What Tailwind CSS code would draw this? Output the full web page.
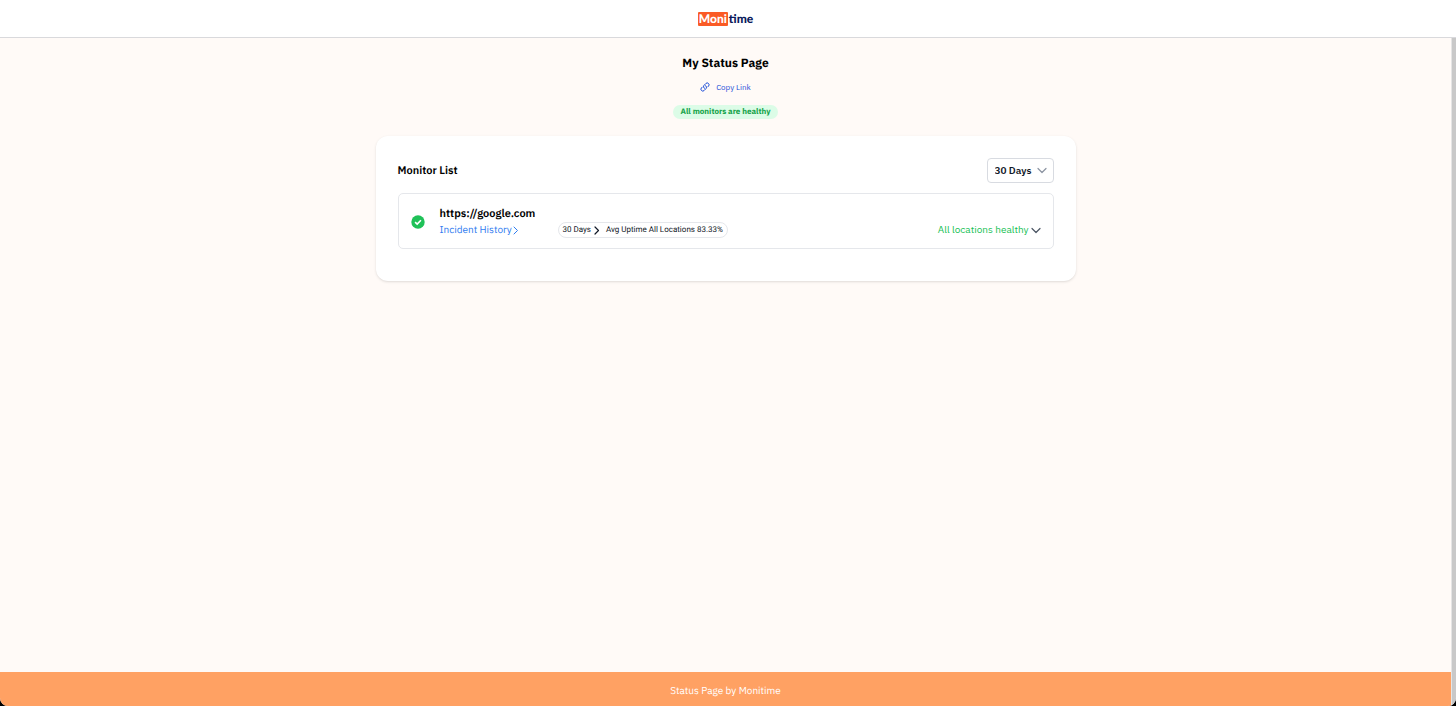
<!DOCTYPE html>
<html lang="en">
<head>
    <meta charset="UTF-8">
    <meta name="viewport" content="width=device-width, initial-scale=1.0">
    <title>My Status Page</title>
    <script src="https://cdn.jsdelivr.net/npm/@tailwindcss/browser@4"></script>
</head>
<body class="bg-black font-['IBM_Plex_Sans',Roboto,sans-serif] text-black [text-rendering:geometricPrecision]">
    <div class="flex h-screen flex-col overflow-hidden rounded-b-lg bg-[#fffaf7]">
        <!-- Header -->
        <header class="flex h-[38px] shrink-0 items-center justify-center border-b border-[#d9d9dc] bg-white pr-[5px]">
            <a href="#" class="flex items-center gap-px font-['Lato',sans-serif] text-[12px] leading-[14px] font-black">
                <span class="rounded-[1px] bg-[#fa5b26] px-px text-white">Moni</span>
                <span class="text-[#0b1a5c]">time</span>
            </a>
        </header>

        <div class="flex min-h-0 flex-1">
            <div class="flex min-w-0 flex-1 flex-col">
                <main class="flex flex-1 flex-col items-center px-4 pt-4">
                    <h1 class="text-[12px] leading-5 font-bold">My Status Page</h1>
                    <button type="button" class="mt-1 flex items-center gap-1.5 text-[8px] leading-[18px] text-[#1d4ed8]">
                        <svg class="size-[10px]" viewBox="0 0 24 24" fill="none" stroke="currentColor" stroke-width="2.4" stroke-linecap="round" stroke-linejoin="round">
                            <path d="M13.19 8.688a4.5 4.5 0 0 1 1.242 7.244l-4.5 4.5a4.5 4.5 0 0 1-6.364-6.364l1.757-1.757m13.35-.622 1.757-1.757a4.5 4.5 0 0 0-6.364-6.364l-4.5 4.5a4.5 4.5 0 0 0 1.242 7.244"/>
                        </svg>
                        Copy Link
                    </button>
                    <p class="mt-[9px] rounded-full bg-[#dcfce7] px-2 text-[8px] leading-[14px] font-bold text-[#16a34a]">All monitors are healthy</p>

                    <!-- Monitor card -->
                    <section class="mt-[17px] w-full max-w-[700px] rounded-xl bg-white px-[22px] pt-[22px] pb-8 shadow-sm">
                        <div class="flex items-center justify-between">
                            <h2 class="text-[11px] leading-4 font-semibold">Monitor List</h2>
                            <div class="relative">
                                <select aria-label="Period" class="block h-[25px] w-[67px] appearance-none rounded-sm border border-[#d8dbe1] bg-white pl-[7px] text-[10px] font-semibold text-[#111827]">
                                    <option>30 Days</option>
                                    <option>60 Days</option>
                                    <option>90 Days</option>
                                </select>
                                <svg class="pointer-events-none absolute top-2 right-[7px] h-[9px] w-[10px]" viewBox="0 0 10 9" fill="none" stroke="#8b93a1" stroke-width="1.2" stroke-linecap="round" stroke-linejoin="round">
                                    <path d="M1 2.5 5 6.5 9 2.5"/>
                                </svg>
                            </div>
                        </div>

                        <article class="mt-[10px] flex items-center rounded-[5px] border border-[#e5e7eb] px-3 pt-3 pb-[10px]">
                            <svg class="size-[14px] shrink-0" viewBox="0 0 24 24">
                                <circle cx="12" cy="12" r="11.5" fill="#1fc158"/>
                                <path d="M7 12.3 10.6 15.6 17 9" fill="none" stroke="#fff" stroke-width="2.8"/>
                            </svg>
                            <div class="ml-[15px] min-w-0 flex-1">
                                <h3 class="text-[11px] leading-4 font-semibold">https://google.com</h3>
                                <div class="flex items-center">
                                    <a href="#" class="flex w-[118px] shrink-0 items-center text-[10px] leading-4 text-[#2f7cf0]">
                                        Incident History
                                        <svg class="h-[9px] w-[7px]" viewBox="0 0 7 9" fill="none" stroke="currentColor" stroke-linecap="round" stroke-linejoin="round">
                                            <path d="M2 1 5.5 4.5 2 8"/>
                                        </svg>
                                    </a>
                                    <div class="flex items-center rounded-full border border-[#e5e7eb] px-1 font-['Roboto',sans-serif] text-[8px] leading-[14px] text-[#111827]">
                                        30 Days
                                        <svg class="mr-1.5 ml-0.5 h-[9px] w-[7px]" viewBox="0 0 7 9" fill="none" stroke="#111827" stroke-width="1.2" stroke-linecap="round" stroke-linejoin="round">
                                            <path d="M2 1 5.5 4.5 2 8"/>
                                        </svg>
                                        Avg Uptime All Locations 83.33%
                                    </div>
                                    <button type="button" class="ml-auto flex items-center gap-0.5 text-[10px] leading-4 text-[#16bf55]">
                                        All locations healthy
                                        <svg class="h-[9px] w-[10px]" viewBox="0 0 10 9" fill="none" stroke="#4b5563" stroke-width="1.2" stroke-linecap="round" stroke-linejoin="round">
                                            <path d="M1 2.5 5 6.5 9 2.5"/>
                                        </svg>
                                    </button>
                                </div>
                            </div>
                        </article>
                    </section>
                </main>

                <!-- Footer -->
                <footer class="bg-[#ffa163] pt-3 pb-2 text-center text-[10px] leading-[14px] text-white">
                    <p>Status Page by Monitime</p>
                </footer>
            </div>

            <!-- Scroll track -->
            <div class="w-[5px] shrink-0 border-l border-[#e4e4e4] bg-[#c8c8c8]"></div>
        </div>
    </div>
</body>
</html>
